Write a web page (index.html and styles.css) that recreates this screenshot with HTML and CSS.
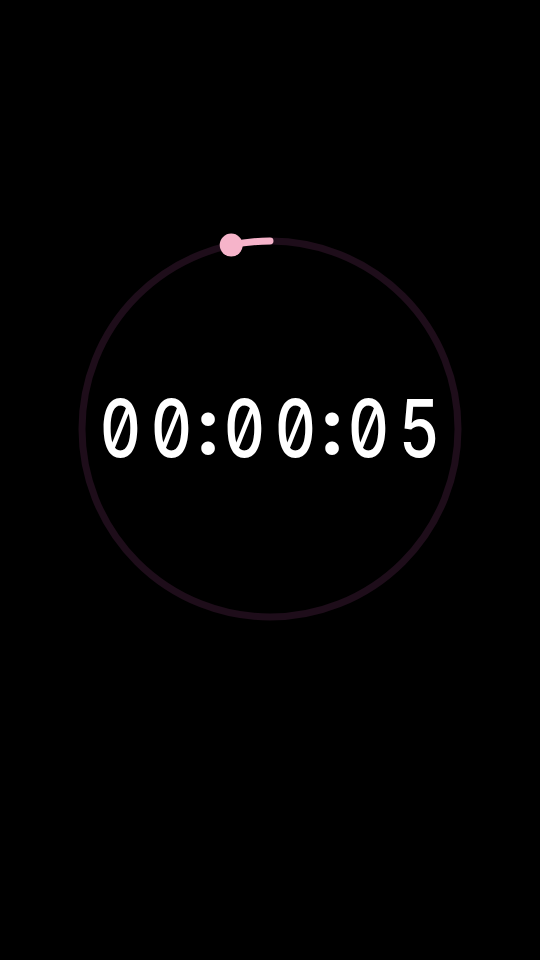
FILE: index.html
```html
<!DOCTYPE html>
<html>
<head>
<meta charset="utf-8">
<link rel="stylesheet" href="styles.css">
</head>
<body>
<main class="screen">
  <div class="timer">
    <svg class="ring" width="400" height="400" viewBox="0 0 400 400">
      <circle cx="200" cy="200" r="188" fill="none" stroke="#1e0d1a" stroke-width="7"/>
      <path d="M161.2 16.1 A188 188 0 0 1 200 12" fill="none" stroke="#f6b4ca" stroke-width="7" stroke-linecap="round"/>
      <circle cx="161.2" cy="16.1" r="11.5" fill="#f6b4ca"/>
    </svg>
    <div class="time">
      <span class="d">0</span><span class="d">0</span><span class="c">:</span><span class="d">0</span><span class="d">0</span><span class="c">:</span><span class="d">0</span><span class="d">5</span>
    </div>
  </div>
</main>
</body>
</html>
```

FILE: styles.css
```css
html, body {
  margin: 0;
  padding: 0;
  background: #000;
}
.screen {
  width: 540px;
  height: 960px;
  display: flex;
  flex-direction: column;
  align-items: center;
  padding-top: 229px;
  box-sizing: border-box;
}
.timer {
  display: grid;
  width: 400px;
  height: 400px;
}
.ring {
  grid-area: 1 / 1;
  display: block;
}
.time {
  grid-area: 1 / 1;
  display: flex;
  justify-content: center;
  align-items: center;
  margin-top: -3px;
  color: #fff;
  font-family: "Inter", sans-serif;
  font-feature-settings: "zero" 1, "tnum" 1;
  font-size: 80px;
  font-weight: 500;
  line-height: 1;
}
.d {
  width: 51px;
  display: flex;
  justify-content: center;
  transform: scaleX(0.8);
}
.c {
  width: 22px;
  display: flex;
  justify-content: center;
  font-weight: 700;
  margin-top: -6px;
}
```
